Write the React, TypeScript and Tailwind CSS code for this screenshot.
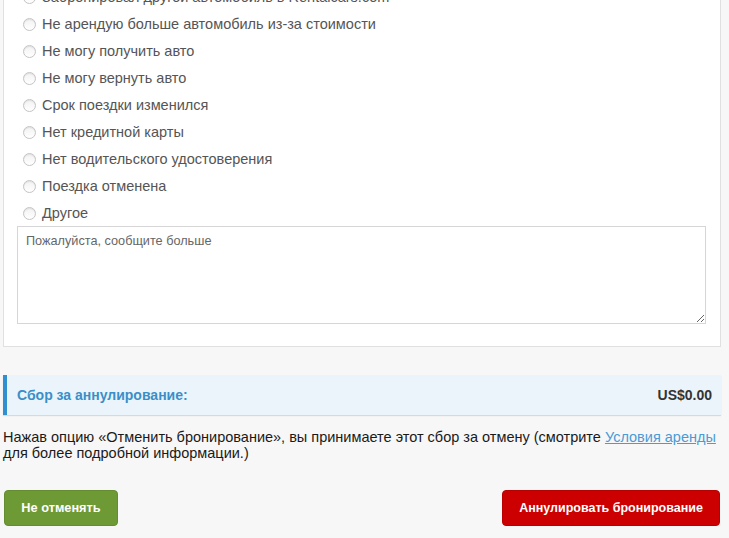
import React from 'react';

const reasons = [
  'Забронировал другой автомобиль в Rentalcars.com',
  'Не арендую больше автомобиль из-за стоимости',
  'Не могу получить авто',
  'Не могу вернуть авто',
  'Срок поездки изменился',
  'Нет кредитной карты',
  'Нет водительского удостоверения',
  'Поездка отменена',
  'Другое',
];

function Radio() {
  return (
    <span className="block h-[13px] w-[13px] shrink-0 rounded-full border border-[#c4c4c4] bg-gradient-to-b from-[#f2f2f2] to-white shadow-[inset_0_1px_1px_rgba(0,0,0,0.08)]" />
  );
}

export default function App() {
  return (
    <div className="h-[538px] w-[729px] overflow-hidden bg-[#f7f7f7] font-['Liberation_Sans',Arial,sans-serif]">
      {/* reasons panel */}
      <div className="-mt-[17px] ml-[3px] w-[718px] border border-[#e0e0e0] bg-white pb-[22px] pl-[13px] pr-[14px]">
        <ul>
          {reasons.map((r) => (
            <li key={r} className="flex h-[27px] items-center gap-[6px] pl-[6px] text-[14.5px] text-[#555]">
              <Radio />
              <span>{r}</span>
            </li>
          ))}
        </ul>
        <textarea
          placeholder="Пожалуйста, сообщите больше"
          className="-mt-px block h-[98px] w-full resize-y border border-[#d6d6d6] px-[8px] py-[5px] text-[12.7px] text-[#555] placeholder:text-[#666] outline-none"
        />
      </div>

      {/* fee */}
      <div className="ml-[3px] mt-[28px] flex h-[40px] w-[718px] items-center justify-between border-l-[4px] border-[#2f8fd1] bg-[#ebf4fb] pl-[10px] pr-[9px] shadow-[0_1px_1px_rgba(0,0,0,0.12)]">
        <span className="text-[14px] font-bold text-[#3a8fc8]">Сбор за аннулирование:</span>
        <span className="text-[14px] font-bold text-[#333]">US$0.00</span>
      </div>

      <p className="ml-[3px] mt-[14px] w-[722px] text-[14.5px] leading-[16px] text-[#1a1a1a]">
        Нажав опцию «Отменить бронирование», вы принимаете этот сбор за отмену (смотрите{' '}
        <a href="#" className="text-[#4a9bd6] underline">Условия аренды</a> для более подробной информации.)
      </p>

      <div className="ml-[4px] mt-[29px] flex w-[716px] justify-between">
        <button className="h-[36px] w-[114px] rounded-[4px] border border-[#648c30] bg-[#6e9a36] text-[12.75px] font-bold text-white">
          Не отменять
        </button>
        <button className="h-[36px] w-[218px] rounded-[4px] border border-[#b80000] bg-[#cc0000] text-[12.5px] font-bold text-white">
          Аннулировать бронирование
        </button>
      </div>
    </div>
  );
}
